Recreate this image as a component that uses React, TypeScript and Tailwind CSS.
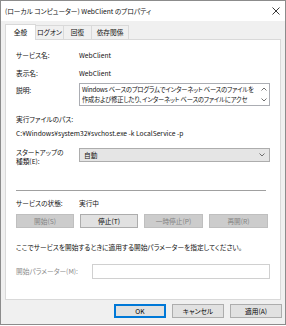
import React from 'react';

const font = "font-['Segoe_UI','Noto_Sans_CJK_JP',sans-serif]";

function Btn({ label, disabled, primary, className = '' }: { label: string; disabled?: boolean; primary?: boolean; className?: string }) {
  const base = 'h-[14px] flex items-center justify-center text-[6.7px] leading-none';
  if (disabled) {
    return <div className={`${base} bg-[#cccccc] border border-[#bfbfbf] text-[#838383] ${className}`}>{label}</div>;
  }
  if (primary) {
    return <div className={`${base} bg-[#e1e1e1] border-2 border-[#0078d7] text-black ${className}`}>{label}</div>;
  }
  return <div className={`${base} bg-[#e1e1e1] border border-[#adadad] text-black ${className}`}>{label}</div>;
}

const descLines = [
  'Windows ベースのプログラムでインターネット ベースのファイルを',
  '作成および修正したり、インターネット ベースのファイルにアクセ',
  'スしたりすることができます。このサービスが停止された場合、',
];

export default function App() {
  return (
    <div className={`w-[286px] h-[326px] bg-white ${font} [font-feature-settings:'palt'] text-[#111] overflow-hidden`}>
      <div className="w-[286px] h-[325px] border border-[#8c8c8c] bg-[#f0f0f0] flex flex-col">
        {/* title bar */}
        <div className="h-[20px] bg-white flex items-center justify-between pl-[4px] pr-[4px]">
          <span className="text-[6.7px] leading-none">(ローカル コンピューター) WebClient のプロパティ</span>
          <svg width="8" height="8" viewBox="0 0 8 8" className="mr-[1px]">
            <path d="M0.5 0.5 L7.5 7.5 M7.5 0.5 L0.5 7.5" stroke="#222" strokeWidth="0.9" />
          </svg>
        </div>

        {/* tabs */}
        <div className="flex items-end pl-[4px] mt-[3px] h-[15px] relative z-10 text-[6.7px] leading-none">
          <div className="h-[16px] w-[31px] bg-white border border-b-0 border-[#d9d9d9] flex items-center justify-center mb-[-1px]">全般</div>
          <div className="h-[14px] w-[28px] border-t border-r border-[#d9d9d9] flex items-center justify-center">ログオン</div>
          <div className="h-[14px] w-[28px] border-t border-r border-[#d9d9d9] flex items-center justify-center">回復</div>
          <div className="h-[14px] w-[37px] border-t border-r border-[#d9d9d9] flex items-center justify-center">依存関係</div>
        </div>

        {/* panel */}
        <div className="mx-[4px] h-[261px] bg-white border border-[#d9d9d9] flex flex-col px-[10px] text-[6.7px] leading-none">
          <div className="flex mt-[11px] h-[9px] items-center">
            <span className="w-[63px]">サービス名:</span>
            <span>WebClient</span>
          </div>
          <div className="flex mt-[9px] h-[9px] items-center">
            <span className="w-[63px]">表示名:</span>
            <span>WebClient</span>
          </div>
          <div className="flex mt-[5px]">
            <span className="w-[63px] pt-[4px]">説明:</span>
            <div className="w-[191px] h-[23px] border border-[#abadb3] flex overflow-hidden">
              <div className="flex-1 pl-[2px] pt-px leading-[9.5px] text-[6.3px] tracking-[-0.2px] overflow-hidden">
                {descLines.map((l) => (
                  <div key={l} className="whitespace-nowrap">{l}</div>
                ))}
              </div>
              <div className="w-[10px] flex flex-col items-center justify-between py-[3px]">
                <svg width="6" height="4" viewBox="0 0 6 4"><path d="M0.5 3.5 L3 1 L5.5 3.5" stroke="#606060" fill="none" strokeWidth="0.9" /></svg>
                <svg width="6" height="4" viewBox="0 0 6 4"><path d="M0.5 0.5 L3 3 L5.5 0.5" stroke="#606060" fill="none" strokeWidth="0.9" /></svg>
              </div>
            </div>
          </div>
          <div className="mt-[9px] h-[9px] flex items-center">実行ファイルのパス:</div>
          <div className="mt-[5px] h-[9px] flex items-center">C:¥Windows¥system32¥svchost.exe -k LocalService -p</div>
          <div className="flex mt-[10px]">
            <div className="w-[63px] leading-[9px]">
              <div>スタートアップの</div>
              <div>種類(E):</div>
            </div>
            <div className="w-[191px] h-[14px] bg-[#e5e5e5] border border-[#adadad] flex items-center justify-between pl-[4px] pr-[4px]">
              <span>自動</span>
              <svg width="6" height="4" viewBox="0 0 6 4"><path d="M0.5 0.5 L3 3 L5.5 0.5" stroke="#606060" fill="none" strokeWidth="0.9" /></svg>
            </div>
          </div>
          <div className="mt-[24px] h-px bg-[#a0a0a0] w-[250px]" />
          <div className="flex mt-[8px] h-[9px] items-center">
            <span className="w-[63px]">サービスの状態:</span>
            <span>実行中</span>
          </div>
          <div className="flex mt-[6px] gap-[6px] w-[254px]">
            <Btn label="開始(S)" disabled className="w-[58px]" />
            <Btn label="停止(T)" className="w-[58px]" />
            <Btn label="一時停止(P)" disabled className="w-[59px]" />
            <Btn label="再開(R)" disabled className="w-[59px]" />
          </div>
          <div className="mt-[15px] h-[9px] flex items-center">ここでサービスを開始するときに適用する開始パラメーターを指定してください。</div>
          <div className="flex mt-[12px] items-center">
            <span className="w-[76px] text-[#8a8a8a]">開始パラメーター(M):</span>
            <div className="w-[178px] h-[15px] border border-[#d0d0d0] bg-white" />
          </div>
        </div>

        {/* footer buttons */}
        <div className="flex justify-end gap-[6px] pr-[3px] mt-[4px]">
          <Btn label="OK" primary className="w-[52px]" />
          <Btn label="キャンセル" className="w-[52px]" />
          <Btn label="適用(A)" className="w-[52px]" />
        </div>
      </div>
    </div>
  );
}
